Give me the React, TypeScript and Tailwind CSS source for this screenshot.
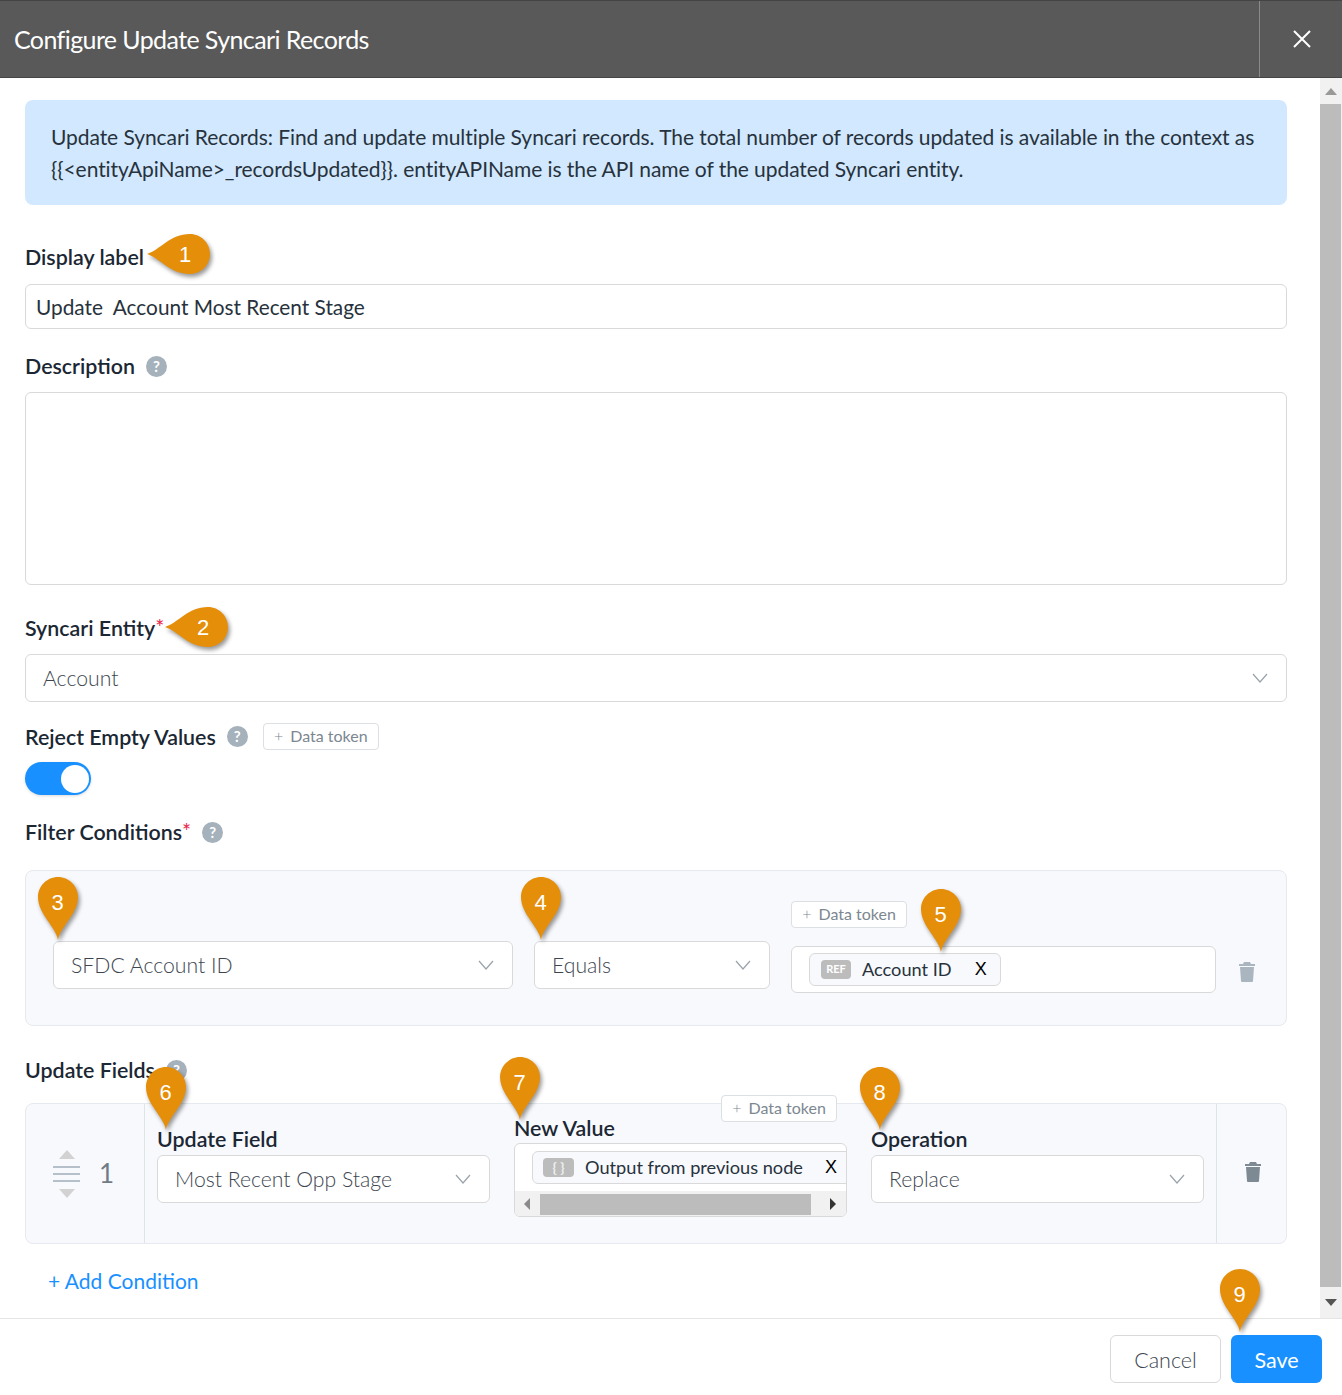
import type { ReactNode } from "react";

const font = "font-['Lato','Noto_Sans',sans-serif]";

function Pin({ n, className, left }: { n: string; className: string; left?: boolean }) {
  return (
    <div className={`absolute z-10 ${className}`}>
      <svg width={left ? 64 : 42} height={left ? 44 : 64} viewBox={left ? "0 0 64 44" : "0 0 42 64"} className="block overflow-visible drop-shadow-[2px_3px_2px_rgba(0,0,0,0.4)]">
        {left ? (
          <path d="M-1 21 C12 17 22 1 42 1 C53 1 62 10 62 21 C62 32 53 41 42 41 C22 41 12 25 -1 21 Z" fill="#e58e0a" />
        ) : (
          <path d="M21 64 C19 51 1 38 1 21 C1 10 10 1 21 1 C32 1 41 10 41 21 C41 38 23 51 21 64 Z" fill="#e58e0a" />
        )}
      </svg>
      <span
        className={`absolute font-['Liberation_Sans',sans-serif] text-[22px] leading-none text-white ${
          left ? "left-[25px] top-[11px] w-[24px] text-center" : "left-0 top-[16px] w-[41px] text-center"
        }`}
      >
        {n}
      </span>
    </div>
  );
}

function Help({ className = "" }: { className?: string }) {
  return (
    <span className={`flex h-[21px] w-[21px] shrink-0 items-center justify-center rounded-full bg-[#a5b1bb] text-[15px] font-bold leading-none text-white ${className}`}>
      ?
    </span>
  );
}

function Label({ children, star }: { children: ReactNode; star?: boolean }) {
  return (
    <span className="text-[21.4px] font-semibold leading-[28px] text-[#1b2733]">
      {children}
      {star && <span className="relative -top-[1px] font-normal text-[#e8264a]">*</span>}
    </span>
  );
}

function Chevron({ className = "" }: { className?: string }) {
  return (
    <svg width="16" height="10" viewBox="0 0 16 10" className={className}>
      <path d="M1 1 L8 9 L15 1" fill="none" stroke="#9aa3ab" strokeWidth="1.2" />
    </svg>
  );
}

function Select({ text, className }: { text: string; className: string }) {
  return (
    <div className={`flex h-[48px] items-center justify-between rounded-[6px] border border-[#d9d9d9] bg-white pl-[17px] pr-[18px] ${className}`}>
      <span className="relative top-[1px] text-[21.2px] font-light text-[#3d4650]">{text}</span>
      <Chevron />
    </div>
  );
}

function DataToken({ className = "" }: { className?: string }) {
  return (
    <div className={`flex h-[27px] w-[116px] items-center justify-center gap-[7px] rounded-[4px] border border-[#dcdfe3] bg-white pb-[2px] text-[16px] text-[#7c8791] ${className}`}>
      <span className="font-light">+</span>
      <span>Data token</span>
    </div>
  );
}

function Trash({ color }: { color: string }) {
  return (
    <svg width="18" height="20" viewBox="0 0 18 20" fill={color}>
      <path d="M6 0 H12 L13 2 H17 V4 H1 V2 H5 Z" />
      <path d="M2 5 H16 L15 19 Q15 20 14 20 H4 Q3 20 3 19 Z" />
    </svg>
  );
}

export default function App() {
  return (
    <div className={`${font} relative flex h-[1395px] w-[1342px] flex-col overflow-hidden bg-white text-[#1b2733]`}>
      <header className="flex h-[78px] shrink-0 items-stretch border-t border-b border-t-[#444] border-b-[#444] bg-[#595959]">
        <h1 className="flex-1 pl-[14px] text-[25px] font-normal leading-[76px] tracking-[-0.6px] text-white">Configure Update Syncari Records</h1>
        <div className="flex w-[83px] items-center justify-center border-l border-[#8a8a8a]">
          <svg width="18" height="18" viewBox="0 0 18 18" className="ml-[2px]">
            <path d="M1 1 L17 17 M17 1 L1 17" stroke="#fff" strokeWidth="2" />
          </svg>
        </div>
      </header>

      <div className="flex min-h-0 flex-1">
        <main className="relative w-[1320px] shrink-0 px-[25px] pr-[33px] pt-[22px]">
          <div className="h-[105px] rounded-[8px] bg-[#d1e8fe] pl-[26px] pt-[21px] text-[21px] leading-[32px] tracking-[-0.07px] whitespace-nowrap text-[#27323c]">
            Update Syncari Records: Find and update multiple Syncari records. The total number of records updated is available in the context as
            <br />
            {"{{<entityApiName>_recordsUpdated}}. entityAPIName is the API name of the updated Syncari entity."}
          </div>

          <div className="mt-[38px] flex h-[28px] items-center">
            <Label>Display label</Label>
          </div>
          <div className="mt-[13px] flex h-[45px] items-center rounded-[6px] border border-[#d9d9d9] pl-[10px] text-[20.8px] whitespace-pre text-[#27323c]">
            Update  Account Most Recent Stage
          </div>

          <div className="mt-[23px] flex h-[28px] items-center gap-[11px]">
            <Label>Description</Label>
            <Help />
          </div>
          <div className="mt-[12px] h-[193px] rounded-[6px] border border-[#d9d9d9]" />

          <div className="mt-[29px] flex h-[28px] items-center">
            <Label star>Syncari Entity</Label>
          </div>
          <Select text="Account" className="mt-[12px]" />

          <div className="mt-[21px] flex h-[27px] items-center">
            <Label>Reject Empty Values</Label>
            <Help className="ml-[11px]" />
            <DataToken className="ml-[15px]" />
          </div>
          <div className="mt-[12px] flex h-[33px] w-[66px] items-center justify-end rounded-full bg-[#1890ff] pr-[2px] shadow-[0_1px_3px_rgba(0,0,0,0.15)]">
            <div className="h-[28px] w-[28px] rounded-full bg-white" />
          </div>

          <div className="mt-[23px] flex h-[28px] items-center gap-[11px]">
            <Label star>Filter Conditions</Label>
            <Help />
          </div>

          <section className="mt-[24px] flex h-[156px] items-start gap-[21px] rounded-[8px] border border-[#e6e9ef] bg-[#f8f9fd] pl-[27px]">
            <Select text="SFDC Account ID" className="mt-[70px] w-[460px]" />
            <Select text="Equals" className="mt-[70px] w-[236px]" />
            <div className="mt-[30px] w-[425px]">
              <DataToken />
              <div className="mt-[18px] flex h-[47px] items-center rounded-[6px] border border-[#d9d9d9] bg-white pl-[17px]">
                <div className="flex h-[33px] w-[192px] items-center rounded-[6px] border border-[#d9d9d9] bg-[#f8f9fd] pl-[11px]">
                  <span className="flex h-[19px] w-[30px] items-center justify-center rounded-[4px] bg-[#bcbcbc] text-[11px] font-bold text-white">REF</span>
                  <span className="ml-[11px] text-[18.2px] text-[#27323c]">Account ID</span>
                  <span className="ml-[23px] font-['Liberation_Sans',sans-serif] text-[18px] text-black">X</span>
                </div>
              </div>
            </div>
            <div className="ml-[1px] mt-[91px]">
              <Trash color="#a9b6bf" />
            </div>
          </section>

          <div className="mt-[30px] flex h-[28px] items-center gap-[11px]">
            <Label>Update Fields</Label>
            <Help />
          </div>

          <section className="mt-[19px] flex h-[141px] rounded-[8px] border border-[#e6e9ef] bg-[#f8f9fd]">
            <div className="flex w-[119px] shrink-0 items-center border-r border-[#e0e3e8] pl-[27px]">
              <div className="flex w-[27px] flex-col items-center">
                <svg width="16" height="9" viewBox="0 0 16 9" fill="#d2d2d2"><path d="M8 0 L16 9 H0 Z" /></svg>
                <div className="mt-[7px] h-[2px] w-[27px] bg-[#b5c0ca]" />
                <div className="mt-[5px] h-[2px] w-[27px] bg-[#b5c0ca]" />
                <div className="mt-[5px] h-[2px] w-[27px] bg-[#b5c0ca]" />
                <svg className="mt-[7px]" width="16" height="9" viewBox="0 0 16 9" fill="#d2d2d2"><path d="M0 0 H16 L8 9 Z" /></svg>
              </div>
              <span className="ml-[19px] text-[26px] text-[#6f7c88]">1</span>
            </div>
            <div className="flex flex-1 gap-[24px] pl-[12px]">
              <div className="w-[333px] pt-[21px]">
                <div className="flex h-[28px] items-center"><Label>Update Field</Label></div>
                <Select text="Most Recent Opp Stage" className="mt-[2px]" />
              </div>
              <div className="relative w-[333px] pt-[10px]">
                <div className="flex h-[28px] items-center"><Label>New Value</Label></div>
                <DataToken className="absolute left-[207px] top-[-9px]" />
                <div className="mt-[1px] h-[74px] overflow-hidden rounded-[6px] border border-[#d9d9d9] bg-white">
                  <div className="h-[47px] pl-[17px] pt-[7px]">
                    <div className="flex h-[33px] w-[330px] items-center rounded-[6px] border border-[#d9d9d9] bg-[#f8f9fd] pl-[10px]">
                      <span className="flex h-[19px] w-[31px] items-center justify-center rounded-[4px] bg-[#bcbcbc] text-[14px] font-bold leading-none text-[#eee]">{"{ }"}</span>
                      <span className="ml-[11px] whitespace-nowrap text-[18.2px] text-[#27323c]">Output from previous node</span>
                      <span className="ml-[22px] font-['Liberation_Sans',sans-serif] text-[18px] text-black">X</span>
                    </div>
                  </div>
                  <div className="flex h-[26px] items-center bg-[#f1f1f1] pl-[9px]">
                    <svg width="6" height="12" viewBox="0 0 6 12" fill="#8a8a8a"><path d="M6 0 V12 L0 6 Z" /></svg>
                    <div className="ml-[10px] h-[21px] w-[271px] bg-[#bcbcbc]" />
                    <svg className="ml-[19px]" width="6" height="12" viewBox="0 0 6 12" fill="#333"><path d="M0 0 L6 6 L0 12 Z" /></svg>
                  </div>
                </div>
              </div>
              <div className="w-[333px] pt-[21px]">
                <div className="flex h-[28px] items-center"><Label>Operation</Label></div>
                <Select text="Replace" className="mt-[2px]" />
              </div>
            </div>
            <div className="flex w-[70px] shrink-0 items-center justify-center border-l border-[#e0e3e8] pb-[3px] pl-[2px]">
              <Trash color="#7d8a94" />
            </div>
          </section>

          <p className="mt-[22px] pl-[23px] text-[21px] leading-[29px] text-[#1890ff]">+ Add Condition</p>

          <Pin left n="1" className="left-[148px] top-[155px]" />
          <Pin left n="2" className="left-[166px] top-[528px]" />
          <Pin n="3" className="left-[37px] top-[798px]" />
          <Pin n="4" className="left-[520px] top-[798px]" />
          <Pin n="5" className="left-[920px] top-[810px]" />
          <Pin n="6" className="left-[145px] top-[988px]" />
          <Pin n="7" className="left-[499px] top-[978px]" />
          <Pin n="8" className="left-[859px] top-[988px]" />
          <Pin n="9" className="left-[1219px] top-[1190px]" />
        </main>

        <aside className="flex w-[22px] flex-col bg-[#f1f1f1]">
          <div className="flex h-[26px] shrink-0 items-center justify-center">
            <svg width="12" height="7" viewBox="0 0 12 7" fill="#999"><path d="M6 0 L12 7 H0 Z" /></svg>
          </div>
          <div className="mr-[1px] flex-1 bg-[#bcbcbc]" />
          <div className="flex h-[31px] shrink-0 items-center justify-center">
            <svg width="12" height="7" viewBox="0 0 12 7" fill="#555"><path d="M0 0 H12 L6 7 Z" /></svg>
          </div>
        </aside>
      </div>

      <footer className="flex h-[77px] shrink-0 justify-end gap-[10px] border-t border-[#e4e4e4] pr-[20px] pt-[16px]">
        <div className="flex h-[48px] w-[111px] items-center justify-center rounded-[6px] border border-[#d9d9d9] bg-white pt-[2px] text-[21.5px] font-light text-[#3d4650]">Cancel</div>
        <div className="flex h-[48px] w-[91px] items-center justify-center rounded-[6px] bg-[#1890ff] pt-[2px] text-[21.5px] text-white">Save</div>
      </footer>
    </div>
  );
}
